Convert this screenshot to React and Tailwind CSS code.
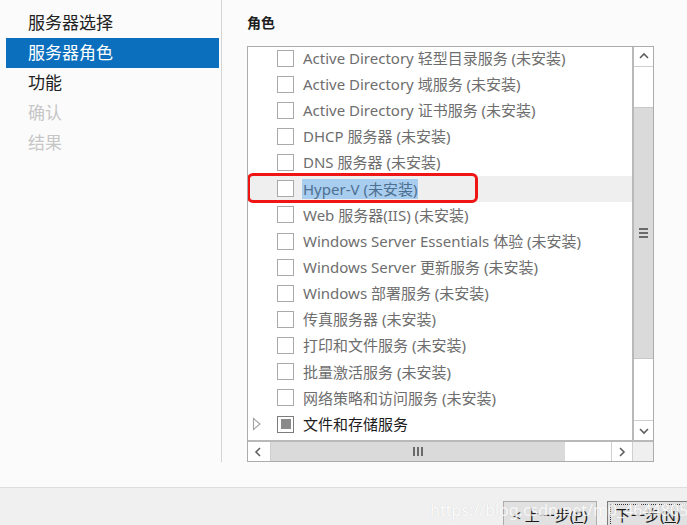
import React from "react";

const navItems = [
  { label: "服务器选择", state: "normal" },
  { label: "服务器角色", state: "active" },
  { label: "功能", state: "normal" },
  { label: "确认", state: "disabled" },
  { label: "结果", state: "disabled" },
];

const roles = [
  "Active Directory 轻型目录服务 (未安装)",
  "Active Directory 域服务 (未安装)",
  "Active Directory 证书服务 (未安装)",
  "DHCP 服务器 (未安装)",
  "DNS 服务器 (未安装)",
  "Hyper-V (未安装)",
  "Web 服务器(IIS) (未安装)",
  "Windows Server Essentials 体验 (未安装)",
  "Windows Server 更新服务 (未安装)",
  "Windows 部署服务 (未安装)",
  "传真服务器 (未安装)",
  "打印和文件服务 (未安装)",
  "批量激活服务 (未安装)",
  "网络策略和访问服务 (未安装)",
];

function Chevron({ dir }) {
  const paths = {
    up: "M2 7 L6 3 L10 7",
    down: "M2 4 L6 8 L10 4",
    left: "M7 2 L3 6 L7 10",
    right: "M4 2 L8 6 L4 10",
  };
  return (
    <svg width="12" height="12" viewBox="0 0 12 12">
      <path d={paths[dir]} fill="none" stroke="#5f5f5f" strokeWidth="1.6" />
    </svg>
  );
}

function RoleRow({ label }) {
  const isHyperV = label.startsWith("Hyper-V");
  return (
    <div
      className={`relative flex items-center h-[26.15px] shrink-0 pl-[29px] ${
        isHyperV ? "bg-[#efefef]" : ""
      }`}
    >
      <div className="w-[17px] h-[17px] border border-[#a9a9a9] bg-white shrink-0" />
      {isHyperV ? (
        <span className="ml-[8px] px-[1px] bg-[#a9cdee] text-[#4d6f91] leading-[20px] whitespace-nowrap">
          {label}
        </span>
      ) : (
        <span className="ml-[9px] text-[#6e6e6e] whitespace-nowrap">{label}</span>
      )}
      {isHyperV && (
        <div className="absolute left-[-1px] top-[-3px] w-[231px] h-[30px] border-[3px] border-[#f01515] rounded-[6px]" />
      )}
    </div>
  );
}

export default function App() {
  return (
    <div
      className="w-[687px] h-[525px] overflow-hidden flex flex-col bg-[#fbfbfb] relative"
      style={{ fontFamily: '"Noto Sans", "Noto Sans CJK SC", sans-serif' }}
    >
      <div className="h-[487px] flex shrink-0">
        {/* Left steps */}
        <div className="w-[222px] h-[462px] border-r border-[#d4d4d4] pt-[8px] flex flex-col">
          {navItems.map((item) => (
            <div
              key={item.label}
              className={`h-[30px] ml-[6px] mr-[2px] pl-[22px] flex items-center text-[17px] ${
                item.state === "active"
                  ? "bg-[#0b6fbd] text-white"
                  : item.state === "disabled"
                  ? "text-[#c6c6c6]"
                  : "text-[#222222]"
              }`}
            >
              {item.label}
            </div>
          ))}
        </div>

        {/* Right content */}
        <div className="flex-1 pl-[25px] pt-[13px]">
          <div className="text-[14px] font-bold text-[#1e1e1e] leading-[20px]">角色</div>
          <div className="mt-[13px] w-[407px] h-[416px] border border-[#acacac] bg-white flex flex-col">
            <div className="flex flex-1 min-h-0">
              {/* rows */}
              <div className="flex-1 overflow-hidden flex flex-col text-[15px]">
                <div className="flex flex-col mt-[-2px]">
                  {roles.map((r) => (
                    <RoleRow key={r} label={r} />
                  ))}
                  <div className="flex items-center h-[26.15px] shrink-0">
                    <div className="w-[29px] flex justify-start pl-[4px]">
                      <svg width="10" height="14" viewBox="0 0 10 14">
                        <path d="M1.5 1.5 L8 7 L1.5 12.5 Z" fill="none" stroke="#a6a6a6" strokeWidth="1.2" />
                      </svg>
                    </div>
                    <div className="w-[17px] h-[17px] border border-[#7d7d7d] bg-white flex items-center justify-center">
                      <div className="w-[10px] h-[10px] bg-[#8a8a8a]" />
                    </div>
                    <span className="ml-[9px] text-[#1c1c1c] whitespace-nowrap">文件和存储服务</span>
                  </div>
                </div>
              </div>
              {/* vertical scrollbar */}
              <div className="w-[21px] border-l-2 border-[#b9b9b9] flex flex-col bg-white">
                <div className="h-[20px] flex items-center justify-center border-b border-[#cfcfcf]">
                  <Chevron dir="up" />
                </div>
                <div className="h-[40px]" />
                <div className="h-[252px] bg-[#dadada] border-y border-[#c8c8c8] flex flex-col items-center justify-center gap-[2px]">
                  <div className="w-[9px] h-[2px] bg-[#6a6a6a]" />
                  <div className="w-[9px] h-[2px] bg-[#6a6a6a]" />
                  <div className="w-[9px] h-[2px] bg-[#6a6a6a]" />
                </div>
                <div className="flex-1" />
                <div className="h-[20px] flex items-center justify-center border-t border-[#cfcfcf]">
                  <Chevron dir="down" />
                </div>
              </div>
            </div>
            {/* horizontal scrollbar */}
            <div className="h-[21px] border-t-2 border-[#b9b9b9] flex shrink-0">
              <div className="w-[23px] flex items-center justify-center border-r border-[#cfcfcf] bg-white">
                <Chevron dir="left" />
              </div>
              <div className="w-[294px] bg-[#dadada] flex items-center justify-center gap-[2px]">
                <div className="w-[2px] h-[9px] bg-[#6a6a6a]" />
                <div className="w-[2px] h-[9px] bg-[#6a6a6a]" />
                <div className="w-[2px] h-[9px] bg-[#6a6a6a]" />
              </div>
              <div className="flex-1 bg-white" />
              <div className="w-[21px] flex items-center justify-center border-l border-[#cfcfcf] bg-white">
                <Chevron dir="right" />
              </div>
              <div className="w-[21px] bg-[#efefef] border-l border-[#cfcfcf]" />
            </div>
          </div>
        </div>
      </div>

      {/* Bottom bar */}
      <div className="flex-1 bg-[#f0f0f0] border-t border-[#dedede] flex items-start pt-[13px] pl-[503px] gap-[10px]">
        <div className="w-[94px] h-[28px] shrink-0 bg-[#e1e1e1] border border-[#adadad] flex items-center justify-center text-[15px] text-[#1a1a1a]">
          &lt; 上一步(<span className="underline">P</span>)
        </div>
        <div className="w-[90px] h-[28px] shrink-0 bg-[#e1e1e1] border border-[#7a7a7a] p-[2px]">
          <div className="w-full h-full border border-dotted border-[#333333] flex items-center pl-[4px] text-[15px] text-[#1a1a1a]">
            下一步(<span className="underline">N</span>)
          </div>
        </div>
      </div>

      {/* watermark */}
      <div className="absolute left-[430px] top-[498px] text-[16px] text-[#ffffff] opacity-80 whitespace-nowrap [text-shadow:0_0_1px_#c8c8c8]">
        https://blog.csdn.net/m0_46448052
      </div>
    </div>
  );
}
